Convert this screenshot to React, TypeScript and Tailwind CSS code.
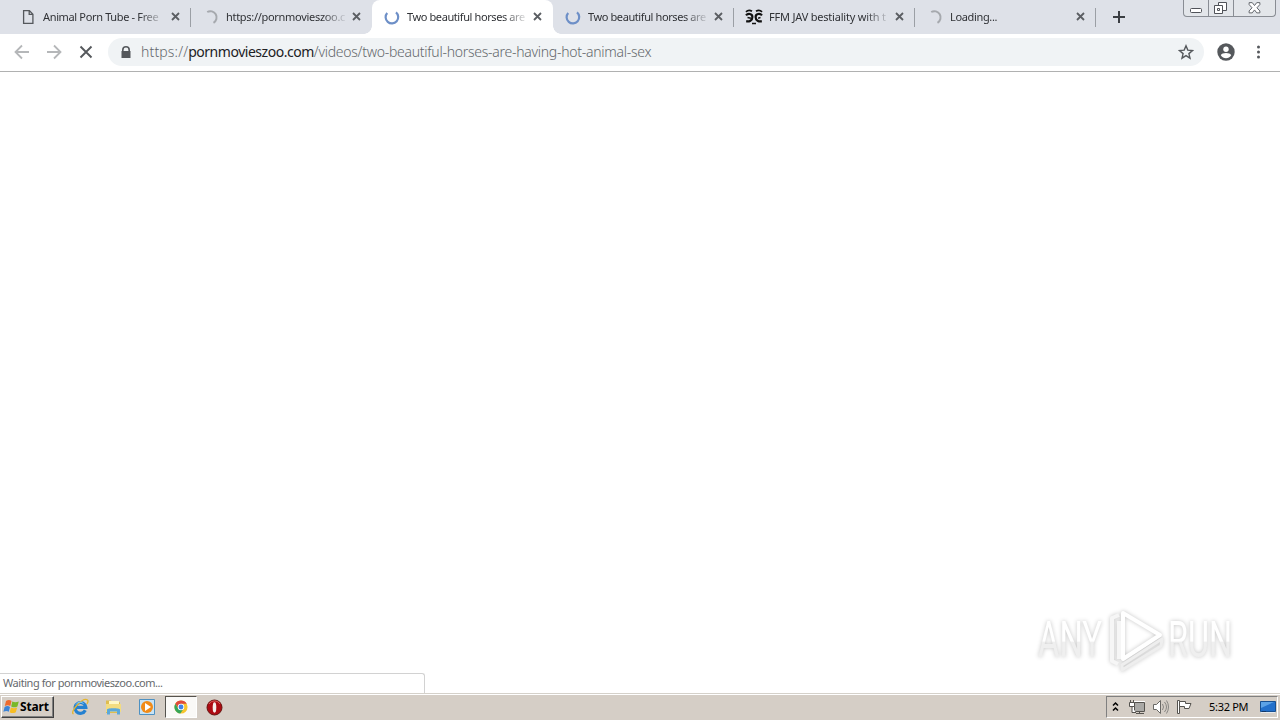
import React from 'react';
import clsx from 'clsx';

type IconKind = 'page' | 'waiting' | 'loading' | 'masks';

interface Tab {
  title: string;
  icon: IconKind;
  active?: boolean;
  divider?: boolean;
  tracking: string;
}

const tabs: Tab[] = [
  { title: 'Animal Porn Tube - Free', icon: 'page', divider: true, tracking: 'tracking-[-0.35px]' },
  { title: 'https://pornmovieszoo.c', icon: 'waiting', tracking: 'tracking-[-0.3px]' },
  { title: 'Two beautiful horses are', icon: 'loading', active: true, tracking: 'tracking-[-0.4px]' },
  { title: 'Two beautiful horses are', icon: 'loading', divider: true, tracking: 'tracking-[-0.4px]' },
  { title: 'FFM JAV bestiality with t', icon: 'masks', divider: true, tracking: 'tracking-[-0.2px]' },
  { title: 'Loading...', icon: 'waiting', divider: true, tracking: 'tracking-[-0.35px]' },
];

const TabIcon: React.FC<{ kind: IconKind }> = ({ kind }) => {
  if (kind === 'page') {
    return (
      <svg className="-ml-0.5 h-4 w-4 shrink-0" viewBox="0 0 16 16" fill="none" stroke="#55585c" strokeWidth="1.3">
        <path d="M3.6 1.6h5.8l3.5 3.6v9.2H3.6zM9.2 1.6v3.8h3.7" />
      </svg>
    );
  }
  if (kind === 'masks') {
    return (
      <svg className="-ml-px -mr-px h-4 w-[18px] shrink-0" viewBox="0 0 18 16" fill="none" stroke="#111" strokeWidth="2.2">
        <path d="M1 2.8C3 .8 5 1 7 2.2M17 2.8C15 .8 13 1 11 2.2" strokeWidth="1.8" />
        <path d="M1 6.4C3 4 7.4 4.6 7.4 8c0 3.6-3.2 4.8-6.2 4.2M17 6.4C15 4 10.6 4.6 10.6 8c0 3.6 3.2 4.8 6.2 4.2" />
        <path d="M2.5 8.6l3.4.6M15.5 8.6l-2.4.6M7 14.4h4" strokeWidth="1.5" />
      </svg>
    );
  }
  if (kind === 'loading') {
    return (
      <svg className="h-4 w-4 shrink-0" viewBox="0 0 16 16" fill="none" stroke="#6d8fc7" strokeWidth="2.2">
        <path d="M3.2 3.9A6.3 6.3 0 1 0 12 3.3" />
      </svg>
    );
  }
  return (
    <svg className="h-4 w-4 shrink-0" viewBox="0 0 16 16" fill="none" stroke="#a6a9ae" strokeWidth="2">
      <path d="M4.2 3A6.2 6.2 0 1 1 10.5 13.8" />
    </svg>
  );
};

const TabItem: React.FC<{ tab: Tab }> = ({ tab }) => (
  <div
    className={clsx(
      'relative flex h-[34px] w-[181px] shrink-0 items-center pl-3',
      tab.active && 'rounded-t-lg bg-white'
    )}
  >
    {tab.active && (
      <>
        <span className="absolute -left-2 bottom-0 h-2 w-2 bg-[radial-gradient(circle_at_0_0,transparent_7.5px,white_8px)]" />
        <span className="absolute -right-2 bottom-0 h-2 w-2 bg-[radial-gradient(circle_at_100%_0,transparent_7.5px,white_8px)]" />
      </>
    )}
    <TabIcon kind={tab.icon} />
    <span
      className={clsx(
        'ml-[7px] w-[124px] whitespace-nowrap text-[11px] leading-4 text-[#303236] [mask-image:linear-gradient(to_right,black_96px,transparent_122px)]',
        tab.tracking
      )}
    >
      {tab.title}
    </span>
    <svg className="absolute left-[161px] top-3 h-[9px] w-[9px]" viewBox="0 0 9 9" stroke="#5b5e63" strokeWidth="1.8">
      <path d="M1 1l7 7M8 1L1 8" />
    </svg>
    {tab.divider && <span className="absolute right-0 top-2 h-[19px] w-px bg-[#9b9fa5]" />}
  </div>
);

const WindowControls = () => (
  <div className="absolute right-[4px] top-0 flex h-[17px] w-[93px] overflow-hidden rounded-b-[4px] border border-t-0 border-[#898d94] bg-[#e3e6ea]">
    <div className="w-[25px] border-r border-[#898d94]">
      <svg className="h-4 w-6" viewBox="0 0 24 16" fill="#fff" stroke="#505359">
        <rect x="6.5" y="8.5" width="11" height="4" rx="1" />
      </svg>
    </div>
    <div className="w-[25px] border-r border-[#898d94]">
      <svg className="h-4 w-6" viewBox="0 0 24 16" fill="#fff" stroke="#505359">
        <path d="M9.5 2.5h8v8h-8z" />
        <path d="M5.5 5.5h8v8h-8zM8.5 8.5h2v2h-2z" />
      </svg>
    </div>
    <svg className="h-4 w-[42px]" viewBox="0 0 42 16" fill="#fff" stroke="#606369">
      <path d="M15.5 2.5h3.2l2.3 3 2.3-3h3.2v2l-3 3.3 3 3.2v2h-3.2l-2.3-3-2.3 3h-3.2v-2l3-3.2-3-3.3z" />
    </svg>
  </div>
);

const TabStrip = () => (
  <div className="relative flex h-[34px] bg-[#dee1e8] pl-[10px]">
    {tabs.map((tab, i) => (
      <TabItem key={i} tab={tab} />
    ))}
    <svg className="ml-[17px] mt-[11px] h-3 w-3" viewBox="0 0 12 12" stroke="#3b3e43" strokeWidth="2">
      <path d="M6 0v12M0 6h12" />
    </svg>
    <WindowControls />
  </div>
);

const Toolbar = () => (
  <div className="flex h-[38px] items-center border-b border-[#b0b1b1] bg-white pl-[14px]">
    <svg className="-mt-0.5 h-4 w-4" viewBox="0 0 16 16" fill="none" stroke="#b5b7b9" strokeWidth="1.8">
      <path d="M15 8H2M8 1.5L1.5 8 8 14.5" />
    </svg>
    <svg className="-mt-0.5 ml-4 h-4 w-4" viewBox="0 0 16 16" fill="none" stroke="#b5b7b9" strokeWidth="1.8">
      <path d="M1 8h13M8 1.5L14.5 8 8 14.5" />
    </svg>
    <svg className="-mt-0.5 ml-4 h-4 w-4" viewBox="0 0 16 16" stroke="#55585c" strokeWidth="1.9">
      <path d="M2.5 2.5l11 11M13.5 2.5l-11 11" />
    </svg>
    <div className="-mt-0.5 ml-[14px] flex h-7 w-[1096px] items-center rounded-full bg-[#f0f3f5] pl-3">
      <svg className="h-3 w-3" viewBox="0 0 12 12" fill="#55585c">
        <path d="M2 5V4a4 4 0 0 1 8 0v1h.5v7h-9V5zm1.6 0h4.8V4a2.4 2.4 0 0 0-4.8 0z" />
      </svg>
      <span className="ml-[9px] w-[600px] whitespace-nowrap text-[14px] font-light leading-5 text-[#64686c]">
        <span className="tracking-[0.15px]">https://</span>
        <span className="font-normal tracking-[-0.47px] text-[#202124]">pornmovieszoo.com</span>
        <span className="tracking-[-0.27px]">/videos/two-beautiful-horses-are-having-hot-animal-sex</span>
      </span>
      <svg className="ml-auto mr-[10px] h-4 w-4" viewBox="0 0 16 16" fill="none" stroke="#55585c" strokeWidth="1.4">
        <path d="M8 1.8l1.8 4.3 4.7.4-3.6 3.1 1.1 4.6-4-2.5-4 2.5 1.1-4.6-3.6-3.1 4.7-.4z" />
      </svg>
    </div>
    <svg className="-mt-0.5 ml-[13px] h-[18px] w-[18px]" viewBox="0 0 18 18">
      <circle cx="9" cy="9" r="8.7" fill="#55585c" />
      <circle cx="9" cy="6.2" r="2.7" fill="#fff" />
      <path d="M3.8 12.3c1-3 9.4-3 10.4 0-2.2 3.8-8.2 3.8-10.4 0z" fill="#fff" />
    </svg>
    <svg className="-mt-px ml-[21px] h-4 w-[5px]" viewBox="0 0 5 16" fill="#55585c">
      <circle cx="2.5" cy="3" r="1.5" />
      <circle cx="2.5" cy="8" r="1.5" />
      <circle cx="2.5" cy="13" r="1.5" />
    </svg>
  </div>
);

const Watermark = () => (
  <div className="absolute bottom-[18px] right-[44px] h-[68px] w-[200px] [filter:drop-shadow(0_0_2px_#c4c4c4)]">
    <svg className="h-[68px] w-[200px] overflow-visible" viewBox="0 0 200 68">
      <defs>
        <linearGradient id="mark" gradientUnits="userSpaceOnUse" x1="0" y1="0" x2="0" y2="68">
          <stop offset="0.5" stopColor="#fff" />
          <stop offset="0.52" stopColor="#efefef" />
        </linearGradient>
      </defs>
      <g fill="url(#mark)" fontFamily="Roboto, sans-serif" fontSize="50">
        <text x="2" y="50" textLength="64" lengthAdjust="spacingAndGlyphs">ANY</text>
        <text x="132" y="50" textLength="64" lengthAdjust="spacingAndGlyphs">RUN</text>
      </g>
      <g fill="none" strokeWidth="4" strokeLinejoin="round">
        <path d="M83 8l-7 3v43l6 3M83 52V14" stroke="#f6f6f6" />
        <path d="M126 32L86 58v5l39-24z" stroke="#eeeeee" strokeWidth="3" />
        <path d="M87 18v34l31-20" stroke="#f0f0f0" strokeWidth="3" />
        <path d="M87 52V6l37 22z" stroke="#fff" />
      </g>
    </svg>
  </div>
);

const WindowsFlag = () => (
  <svg className="h-4 w-[17px]" viewBox="0 0 17 16">
    <path d="M3 2c2-1.3 4-1.2 5.5 0L7.3 7C5.7 5.9 4 5.8 1.8 7z" fill="#ed6a2d" />
    <path d="M9.3 2.5c2 1.1 4 1.1 6.5 0L14.4 7.4c-2.4 1.2-4.2 1.1-6.2 0z" fill="#79b829" />
    <path d="M1.6 8c2-1.3 3.8-1.2 5.4 0L5.8 12.7C4.2 11.6 2.5 11.7.4 12.8z" fill="#3b83d6" />
    <path d="M7.9 8.4c2 1.1 4 1.1 6.3 0L12.8 13.2c-2.4 1.2-4.2 1.1-6.1 0z" fill="#f7bd24" />
  </svg>
);

const QuickLaunch = () => (
  <>
    <svg className="ml-[17px] h-[18px] w-[18px]" viewBox="0 0 18 18" fill="none">
      <path d="M14.3 12.3A5.4 5.4 0 1 1 14.8 9.3H5" stroke="#2581d0" strokeWidth="3.2" />
      <path d="M2.5 16C-1.8 14 12-1.5 16.5 2c1 .9.4 2.4-.6 4" stroke="#e4b52f" strokeWidth="1.3" />
      <path d="M5 6.5c2-3 6-3 7.5-.7" stroke="#80ceff" />
    </svg>
    <svg className="ml-4 h-[18px] w-[17px]" viewBox="0 0 17 18">
      <path d="M1 2.5h5l1.5 1.8H15V15H1z" fill="#dfbd4f" />
      <path d="M4 3h10v4H4z" fill="#fff7c5" />
      <path d="M1 6h15v8H1z" fill="#f3dc80" />
      <path d="M2 16.5v-5c0-1.8 13-1.8 13 0v5h-3v-3H5v3z" fill="#5ba8da" />
    </svg>
    <svg className="ml-4 h-[18px] w-[18px]" viewBox="0 0 18 18">
      <path d="M1.5 1.5h15v15h-15z" fill="#c8e3f5" stroke="#4e91c2" />
      <circle cx="9" cy="9" r="6" fill="#f18b18" />
      <path d="M7 5l6 4-6 4z" fill="#fff" />
    </svg>
    <div className="ml-[9px] flex h-[22px] w-[32px] items-center justify-center border border-b-white border-l-[#55534e] border-r-white border-t-[#55534e] bg-[#faf9f7]">
      <svg className="h-[14px] w-[14px]" viewBox="0 0 16 16">
        <circle cx="8" cy="8" r="7.5" fill="#f7c52e" />
        <path d="M1.5 4.2A7.5 7.5 0 0 1 14.5 4.2H8L5 9.5z" fill="#df4a3c" />
        <path d="M1.5 4.2A7.5 7.5 0 0 0 7.2 15.5L11 10H5z" fill="#35a559" />
        <circle cx="8" cy="8" r="3.7" fill="#fff" />
        <circle cx="8" cy="8" r="2.8" fill="#3f82e8" />
      </svg>
    </div>
    <svg className="ml-[9px] h-[17px] w-[17px]" viewBox="0 0 17 17">
      <circle cx="8.5" cy="8.5" r="7.5" fill="#ad0b12" stroke="#65130f" />
      <path d="M3 5c2-4 9-4 11 0" fill="none" stroke="#de625f" />
      <ellipse cx="8.5" cy="8.5" rx="1.8" ry="5.2" fill="#f6efeb" />
    </svg>
  </>
);

const Tray = () => (
  <div className="ml-auto mr-[2px] flex h-[22px] w-[172px] items-center border border-b-white border-l-[#808080] border-r-white border-t-[#808080] pl-[5px]">
    <svg className="h-3 w-[7px]" viewBox="0 0 7 12" fill="none" stroke="#000" strokeWidth="1.5">
      <path d="M1 4.5L3.5 2 6 4.5M1 9.5L3.5 7 6 9.5" />
    </svg>
    <svg className="ml-[10px] h-4 w-4" viewBox="0 0 16 16" fill="none" stroke="#55534f">
      <path d="M5.5 3.5h9v8h-9z" fill="#aaa9a6" stroke="#fff" strokeWidth="3" />
      <path d="M5.5 3.5h10v9h-10zM7 14.5h8M10.5 12v2" fill="#aaa9a6" />
      <path d="M.5 3.5h5v4h-5zM1.5 1v2M4.5 1v2M3 8v5.5h4" fill="#fff" />
    </svg>
    <svg className="ml-[7px] h-4 w-[17px]" viewBox="0 0 17 16" fill="none" stroke="#696865">
      <path d="M1.5 5.5h3l4-4v13l-4-4h-3z" fill="#fff" />
      <path d="M10.5 5q2 3 0 6M12.5 3q4 5 0 10M14.5 1.5q4 6.5 0 13" stroke="#888683" />
    </svg>
    <svg className="ml-[7px] h-4 w-[17px]" viewBox="0 0 17 16" stroke="#55534f">
      <path d="M1.5 1.5h2v13h-2z" fill="#fff" />
      <path d="M3.5 2.5h6v2h5.5l-2 5H8.5v-2h-5z" fill="#fff" />
    </svg>
    <span className="ml-4 w-[42px] whitespace-nowrap text-[11px] leading-4 tracking-[-0.3px] text-black">5:32 PM</span>
    <svg className="ml-[9px] h-4 w-4 shrink-0" viewBox="0 0 16 16">
      <path d="M.5 2.5h15v10H.5z" fill="#2370cb" stroke="#174f91" />
      <path d="M1 3h13L1 9z" fill="#5ca2e6" />
      <path d="M1 13h14v1H1z" fill="#e5e9ee" />
      <path d="M2 12h4v1H2z" fill="#163764" />
    </svg>
  </div>
);

const Taskbar = () => (
  <div className="flex h-[27px] items-center border-t border-[#d5d1ca] bg-[#d5cec6] shadow-[inset_0_1px_white]">
    <div className="ml-px flex h-[22px] w-[53px] items-center border border-b-[#404040] border-l-white border-r-[#404040] border-t-white pl-px shadow-[inset_-1px_-1px_#808080]">
      <WindowsFlag />
      <span className="text-[12px] font-bold leading-4 tracking-[-0.15px] text-black">Start</span>
    </div>
    <QuickLaunch />
    <Tray />
  </div>
);

export default function App() {
  return (
    <div className="flex h-[720px] w-[1280px] flex-col overflow-hidden bg-white font-['Noto_Sans',sans-serif]">
      <TabStrip />
      <Toolbar />
      <main className="relative flex-1 bg-white">
        <div className="absolute bottom-0 left-0 flex h-5 w-[425px] items-center rounded-tr-[3px] border-r border-t border-[#d2d2d2] bg-white pb-0.5 pl-[3px] text-[11px] leading-4 tracking-[-0.45px] text-[#66696d]">
          Waiting for pornmovieszoo.com...
        </div>
        <Watermark />
      </main>
      <Taskbar />
    </div>
  );
}
